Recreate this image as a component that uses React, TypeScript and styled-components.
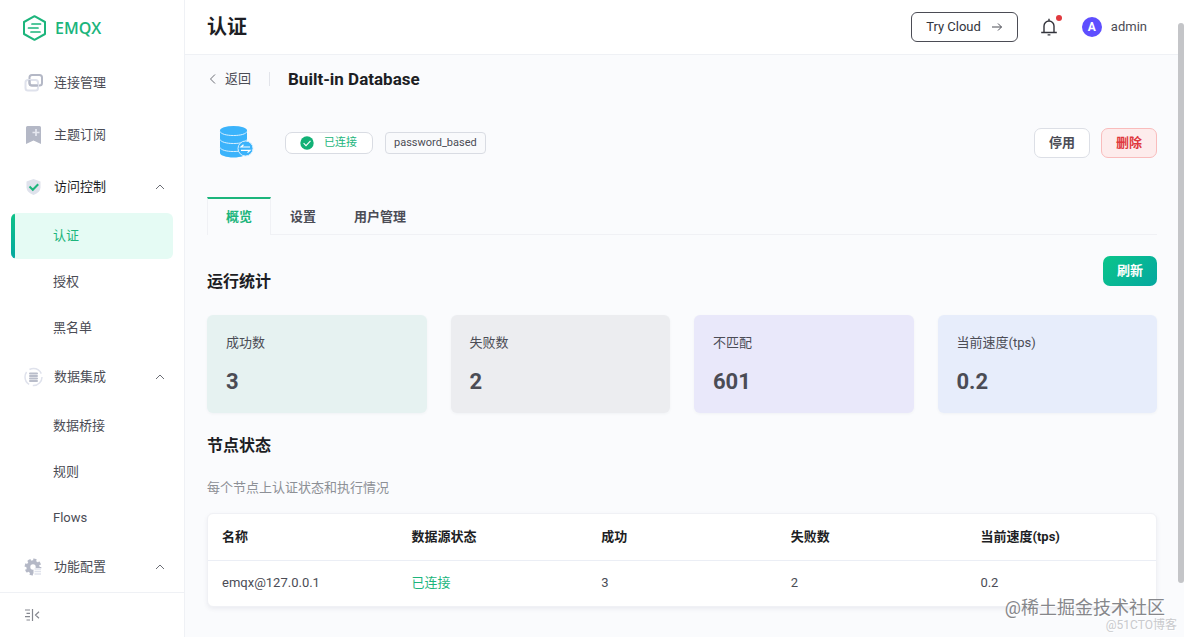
import React from "react";
import styled, { createGlobalStyle, css } from "styled-components";

const GlobalStyle = createGlobalStyle`
  *, *::before, *::after { box-sizing: border-box; }
  body {
    margin: 0;
    background: #fafbfd;
    color: #4b4c55;
    font: 13px/20px Roboto, "Noto Sans CJK SC", sans-serif;
  }
  h1, h2, h3, p, ul, dl, dd { margin: 0; padding: 0; }
  ul { list-style: none; }
  button { font: inherit; color: inherit; cursor: pointer; }
  a { color: inherit; text-decoration: none; }
  svg { display: block; flex: none; }
`;

const Shell = styled.div`
  position: relative;
  display: flex;
  height: 100vh;
  overflow: hidden;
`;

const Sidebar = styled.aside`
  display: flex;
  flex-direction: column;
  flex: 0 0 185px;
  background: #fff;
  border-right: 1px solid #eff1f5;
`;

const Brand = styled.a`
  display: flex;
  align-items: center;
  flex: 0 0 57px;
  gap: 8px;
  padding: 0 0 2px 22px;
  color: #1cb57c;
  font: 600 16px/20px "Open Sans", sans-serif;
`;

const Menu = styled.nav`
  flex: 1;
  min-height: 0;
  overflow: hidden;
`;

const groupStyle = css`
  display: flex;
  align-items: center;
  gap: 8px;
  width: 100%;
  height: 52px;
  padding: 0 18px 0 24px;
  border: 0;
  background: none;
  text-align: left;
`;

const GroupLink = styled.a`
  ${groupStyle}
`;

const GroupButton = styled.button<{ $current?: boolean }>`
  ${groupStyle}
  color: ${(p) => (p.$current ? "#1d1e24" : "#4b4c55")};
`;

const GroupLabel = styled.span`
  flex: 1;
  padding-left: 2px;
`;

const SubLink = styled.a<{ $active?: boolean }>`
  position: relative;
  display: flex;
  align-items: center;
  height: 46px;
  margin: 0 11px;
  padding-left: 42px;
  border-radius: 6px;
  overflow: hidden;
  ${(p) =>
    p.$active &&
    css`
      color: #1cb57c;
      background: #e5fbf4;
      &::before {
        content: "";
        position: absolute;
        inset: 0 auto 0 0;
        width: 4px;
        border-radius: 2px;
        background: linear-gradient(#0fc287, #05a8a0);
      }
    `}
`;

const SidebarFooter = styled.footer`
  display: flex;
  align-items: center;
  flex: 0 0 45px;
  padding-left: 24px;
  border-top: 1px solid #eff1f5;
`;

const IconButton = styled.button`
  position: relative;
  padding: 0;
  border: 0;
  background: none;
`;

const Main = styled.main`
  display: flex;
  flex-direction: column;
  flex: 1;
  min-width: 0;
`;

const TopBar = styled.header`
  display: flex;
  align-items: center;
  justify-content: space-between;
  flex: 0 0 55px;
  padding: 0 37px 0 22px;
  background: #fff;
  border-bottom: 1px solid #eff1f5;
`;

const PageTitle = styled.h1`
  color: #1d1e24;
  font-size: 20px;
  line-height: 28px;
  font-weight: 700;
`;

const TopActions = styled.div`
  display: flex;
  align-items: center;
`;

const CloudLink = styled.a`
  display: flex;
  align-items: center;
  gap: 10px;
  height: 30px;
  margin-right: 22px;
  padding: 0 14px;
  border: 1px solid #4b4c55;
  border-radius: 6px;
  color: #33343c;
`;

const Dot = styled.span`
  position: absolute;
  top: -3px;
  right: -4px;
  width: 6px;
  height: 6px;
  border-radius: 50%;
  background: #e0393e;
`;

const User = styled.button`
  display: flex;
  align-items: center;
  gap: 9px;
  margin-left: 24px;
  padding: 0;
  border: 0;
  background: none;
`;

const Avatar = styled.span`
  width: 20px;
  height: 20px;
  border-radius: 50%;
  background: #5e4eff;
  color: #fff;
  font-size: 12px;
  font-weight: 700;
  text-align: center;
`;

const Content = styled.div`
  flex: 1;
  min-height: 0;
  padding: 14px 27px 0 22px;
  overflow: hidden;
`;

const Crumbs = styled.div`
  display: flex;
  align-items: center;
  height: 20px;
`;

const BackLink = styled.a`
  display: flex;
  align-items: center;
  gap: 6px;
  height: 14px;
  padding-right: 18px;
  border-right: 1px solid #e2e4ea;
`;

const ResourceName = styled.h2`
  margin-left: 18px;
  color: #1d1e24;
  font-size: 17px;
  line-height: 20px;
  font-weight: 700;
`;

const Resource = styled.section`
  display: flex;
  align-items: center;
  height: 34px;
  margin-top: 37px;
  padding-left: 12px;
`;

const Tag = styled.span<{ $status?: boolean }>`
  display: flex;
  align-items: center;
  gap: 10px;
  height: 22px;
  padding: ${(p) => (p.$status ? "0 15px 0 14px" : "0 8px")};
  margin-left: ${(p) => (p.$status ? "31px" : "12px")};
  border: 1px solid #d9dce3;
  border-radius: ${(p) => (p.$status ? "7px" : "4px")};
  background: ${(p) => (p.$status ? "#fff" : "#f9fafc")};
  color: ${(p) => (p.$status ? "#1cb57c" : "#4b4c55")};
  font-size: 11px;
`;

const Buttons = styled.div`
  display: flex;
  gap: 11px;
  margin-left: auto;
`;

const looks = {
  plain: css`
    border: 1px solid #dcdfe6;
    background: #fff;
  `,
  danger: css`
    border: 1px solid #f9bcbc;
    background: #fdecec;
    color: #e0393e;
  `,
  primary: css`
    border: 0;
    background: linear-gradient(135deg, #0ac58a, #05a8a0);
    color: #fff;
  `,
};

const Button = styled.button<{ $look: keyof typeof looks }>`
  height: 30px;
  padding: 0 14px;
  border-radius: 7px;
  font-weight: 700;
  line-height: 20px;
  ${(p) => looks[p.$look]}
`;

const Tabs = styled.div`
  display: flex;
  height: 38px;
  margin-top: 37px;
`;

const Tab = styled.button<{ $active?: boolean }>`
  padding: 2px 19px 0;
  border: 0;
  border-bottom: 1px solid #f0f1f5;
  background: none;
  font-weight: 700;
  ${(p) =>
    p.$active &&
    css`
      padding: 0 18px;
      color: #1cb57c;
      border: 1px solid #f0f1f5;
      border-top: 2px solid #1cb57c;
      border-bottom: 0;
    `}
`;

const TabsRest = styled.div`
  flex: 1;
  border-bottom: 1px solid #f0f1f5;
`;

const SectionHead = styled.div`
  display: flex;
  align-items: flex-start;
  justify-content: space-between;
  height: 59px;
  margin-top: 21px;
`;

const SectionTitle = styled.h3`
  color: #1d1e24;
  font-size: 16px;
  line-height: 24px;
  font-weight: 700;
  ${SectionHead} & {
    padding-top: 14px;
  }
`;

const Stats = styled.dl`
  display: grid;
  grid-template-columns: repeat(4, 1fr);
  gap: 24px;
  margin-bottom: 21px;
`;

const Stat = styled.div<{ $tone: string }>`
  height: 98px;
  padding: 18px 19px;
  border-radius: 6px;
  background: ${(p) => p.$tone};
  box-shadow: 0 1px 3px rgba(60, 70, 100, 0.05);
  dd {
    margin-top: 16px;
    font-size: 22px;
    line-height: 26px;
    font-weight: 700;
  }
`;

const Hint = styled.p`
  margin: 20px 0 15px;
  color: #8d9096;
`;

const TableCard = styled.div`
  border: 1px solid #f0f1f5;
  border-radius: 6px;
  background: #fff;
  box-shadow: 0 2px 4px rgba(60, 70, 100, 0.08);
  overflow: hidden;
`;

const Table = styled.table`
  width: 100%;
  border-collapse: collapse;
  table-layout: fixed;
  th,
  td {
    height: 46px;
    padding: 0 14px;
    text-align: left;
  }
  th {
    color: #1d1e24;
    font-weight: 700;
    border-bottom: 1px solid #ebeef5;
  }
`;

const Connected = styled.span`
  color: #1cb57c;
`;

const ScrollThumb = styled.div`
  position: absolute;
  top: 23px;
  right: 0;
  bottom: 54px;
  width: 6px;
  border-radius: 3px;
  background: #c4c5c8;
`;

const Watermarks = styled.div`
  position: absolute;
  right: 7px;
  bottom: 5px;
  display: flex;
  flex-direction: column;
  align-items: flex-end;
  pointer-events: none;
`;

const Watermark = styled.span<{ $small?: boolean }>`
  margin-right: ${(p) => (p.$small ? "0" : "12px")};
  color: ${(p) => (p.$small ? "#c9cacd" : "#86878b")};
  font-size: ${(p) => (p.$small ? "12px" : "18px")};
  line-height: ${(p) => (p.$small ? "14px" : "20px")};
  text-shadow: 1px 1px 0 #fff;
`;

const LogoIcon = () => (
  <svg width="25" height="26" viewBox="0 0 25 26" fill="none" stroke="#1cb57c" strokeWidth="2" strokeLinejoin="round">
    <path d="M12.5 1.2 23 7v12l-10.500 5.800L2 19V7z" />
    <path d="M10 9h8.500M6.500 13h9.500M9 17h9" strokeLinecap="round" strokeWidth="1.700" />
  </svg>
);

const LinksIcon = () => (
  <svg width="20" height="20" viewBox="0 0 20 20" fill="none" strokeWidth="2">
    <rect x="5.500" y="2" width="12.500" height="10.500" rx="2.500" stroke="#b4b8c6" />
    <rect x="1.500" y="7" width="12.500" height="10.500" rx="2.500" stroke="#dfe2ec" />
    <path d="M5.500 7v3q0 2.500 2.500 2.500h6" stroke="#b4b8c6" />
  </svg>
);

const BookmarkIcon = () => (
  <svg width="20" height="20" viewBox="0 0 20 20">
    <path d="M2 2.500Q2 1 3.500 1h12Q17 1 17 2.500V19l-7.500-3.500L2 19z" fill="#b4b8c6" />
    <path d="M12 4v7M8.500 7.500h7" stroke="#e6e8f0" strokeWidth="1.700" />
  </svg>
);

const ShieldIcon = () => (
  <svg width="20" height="20" viewBox="0 0 20 20" fill="none">
    <path d="M9.500 2 16.500 4.500v6q0 4.500-7 7.500-7-3-7-7.500v-6z" fill="#dfe2ec" />
    <path d="m5.500 9.500 3.300 3.300 5.400-5.600" stroke="#1cb57c" strokeWidth="2" />
  </svg>
);

const DataIcon = () => (
  <svg width="20" height="20" viewBox="0 0 20 20" fill="none">
    <circle cx="9.500" cy="10" r="8.500" stroke="#dfe2ec" strokeWidth="1.500" strokeDasharray="14 3.800" />
    <path d="M6 6.500h7M6 9h7M6 11.500h7M6 14h7" stroke="#b9bdca" strokeWidth="2" strokeLinecap="round" />
  </svg>
);

const GearIcon = () => (
  <svg width="20" height="20" viewBox="0 0 20 20" fill="none">
    <circle cx="9" cy="10" r="4.700" stroke="#b4b8c6" strokeWidth="4" />
    <circle cx="9" cy="10" r="7.200" stroke="#b4b8c6" strokeWidth="2.400" strokeDasharray="3.200 2.455" />
    <path d="M9.500 11h8v7h-8z" fill="#fff" />
    <path d="M10.500 12h6.500M10.500 14.500h6.500M10.500 17h6.500" stroke="#dfe2ec" strokeWidth="1.500" />
  </svg>
);

const CollapseIcon = () => (
  <svg width="16" height="14" viewBox="0 0 16 14" fill="none" stroke="#85878f" strokeWidth="1.200">
    <path d="M1 2h5M2.500 5.300h3.500M1 8.700h5M2.500 12h3.500M8.500 1v12M15 3.800 11.500 7l3.500 3.200" />
  </svg>
);

const CaretIcon = ({ left = false }: { left?: boolean }) => (
  <svg width="12" height="12" viewBox="0 0 12 12" fill="none" stroke="#6b6d75">
    <path d={left ? "M8 1.500 3.500 6 8 10.500" : "M2 8l4-4 4 4"} />
  </svg>
);

const ArrowIcon = () => (
  <svg width="12" height="12" viewBox="0 0 12 12" fill="none" stroke="#4b4c55">
    <path d="M1 6h9.500M7 2.500 10.500 6 7 9.500" />
  </svg>
);

const BellIcon = () => (
  <svg width="18" height="18" viewBox="0 0 18 18" fill="none" stroke="#33343c" strokeWidth="1.400">
    <path d="M4 14.500V8a5 5 0 0 1 10 0v6.500M1.200 14.500h15.600M9 .8v2.200M7.600 16.900h2.800" />
  </svg>
);

const CheckIcon = () => (
  <svg width="14" height="14" viewBox="0 0 14 14" fill="none">
    <circle cx="7" cy="7" r="6.700" fill="#12b176" />
    <path d="m3.600 7.200 2.400 2.400 4.500-4.800" stroke="#fff" strokeWidth="1.100" />
  </svg>
);

const DatabaseIcon = () => (
  <svg width="35" height="36" viewBox="0 0 35 36" fill="none">
    <path d="M1 5.500v22.500c0 2.300 6 4.500 13.500 4.500S28 30.300 28 28V5.500z" fill="#3bb3fb" />
    <ellipse cx="14.500" cy="5.500" rx="13.500" ry="4.500" fill="#3bb3fb" />
    <path
      d="M1 6.500c1 2.400 6 4 13.500 4s12.500-1.600 13.500-4M1 14.500c1 2.400 6 4 13.500 4s12.500-1.600 13.500-4M1 22.500c1 2.400 6 4 13.500 4s12.500-1.600 13.500-4"
      stroke="#d9f0ff"
    />
    <circle cx="26.500" cy="23.500" r="7.500" fill="#3bb3fb" stroke="#d9f0ff" />
    <path d="M31 22h-9l2.500-2.300M22 25.300h9l-2.500 2.300" stroke="#fff" strokeWidth="1.200" />
  </svg>
);

const menu = [
  { label: "连接管理", icon: <LinksIcon /> },
  { label: "主题订阅", icon: <BookmarkIcon /> },
  { label: "访问控制", icon: <ShieldIcon />, current: true, items: ["认证", "授权", "黑名单"] },
  { label: "数据集成", icon: <DataIcon />, items: ["数据桥接", "规则", "Flows"] },
  { label: "功能配置", icon: <GearIcon />, items: [] },
];

const stats = [
  { label: "成功数", value: "3", tone: "#e6f2f1" },
  { label: "失败数", value: "2", tone: "#ecedf0" },
  { label: "不匹配", value: "601", tone: "#e9e8fa" },
  { label: "当前速度(tps)", value: "0.2", tone: "#e7edfb" },
];

const columns = ["名称", "数据源状态", "成功", "失败数", "当前速度(tps)"];

export default function App() {
  return (
    <Shell>
      <GlobalStyle />
      <Sidebar>
        <Brand href="#home">
          <LogoIcon />
          EMQX
        </Brand>
        <Menu>
          <ul>
            {menu.map((group) => (
              <li key={group.label}>
                {group.items ? (
                  <GroupButton type="button" aria-expanded="true" $current={group.current}>
                    {group.icon}
                    <GroupLabel>{group.label}</GroupLabel>
                    <CaretIcon />
                  </GroupButton>
                ) : (
                  <GroupLink href="#menu">
                    {group.icon}
                    <GroupLabel>{group.label}</GroupLabel>
                  </GroupLink>
                )}
                {group.items && (
                  <ul>
                    {group.items.map((item) => (
                      <li key={item}>
                        <SubLink href="#page" $active={item === "认证"}>
                          {item}
                        </SubLink>
                      </li>
                    ))}
                  </ul>
                )}
              </li>
            ))}
          </ul>
        </Menu>
        <SidebarFooter>
          <IconButton type="button" aria-label="收起菜单">
            <CollapseIcon />
          </IconButton>
        </SidebarFooter>
      </Sidebar>

      <Main>
        <TopBar>
          <PageTitle>认证</PageTitle>
          <TopActions>
            <CloudLink href="#cloud">
              Try Cloud
              <ArrowIcon />
            </CloudLink>
            <IconButton type="button" aria-label="通知">
              <BellIcon />
              <Dot />
            </IconButton>
            <User type="button">
              <Avatar>A</Avatar>
              admin
            </User>
          </TopActions>
        </TopBar>

        <Content>
          <Crumbs>
            <BackLink href="#back">
              <CaretIcon left />
              返回
            </BackLink>
            <ResourceName>Built-in Database</ResourceName>
          </Crumbs>

          <Resource>
            <DatabaseIcon />
            <Tag $status>
              <CheckIcon />
              已连接
            </Tag>
            <Tag>password_based</Tag>
            <Buttons>
              <Button type="button" $look="plain">停用</Button>
              <Button type="button" $look="danger">删除</Button>
            </Buttons>
          </Resource>

          <Tabs role="tablist">
            <Tab type="button" role="tab" aria-selected="true" $active>概览</Tab>
            <Tab type="button" role="tab" aria-selected="false">设置</Tab>
            <Tab type="button" role="tab" aria-selected="false">用户管理</Tab>
            <TabsRest />
          </Tabs>

          <SectionHead>
            <SectionTitle>运行统计</SectionTitle>
            <Button type="button" $look="primary">刷新</Button>
          </SectionHead>
          <Stats>
            {stats.map((s) => (
              <Stat key={s.label} $tone={s.tone}>
                <dt>{s.label}</dt>
                <dd>{s.value}</dd>
              </Stat>
            ))}
          </Stats>

          <SectionTitle>节点状态</SectionTitle>
          <Hint>每个节点上认证状态和执行情况</Hint>
          <TableCard>
            <Table>
              <thead>
                <tr>
                  {columns.map((c) => (
                    <th key={c} scope="col">{c}</th>
                  ))}
                </tr>
              </thead>
              <tbody>
                <tr>
                  <td>emqx@127.0.0.1</td>
                  <td><Connected>已连接</Connected></td>
                  <td>3</td>
                  <td>2</td>
                  <td>0.2</td>
                </tr>
              </tbody>
            </Table>
          </TableCard>
        </Content>
      </Main>

      <ScrollThumb />
      <Watermarks>
        <Watermark>@稀土掘金技术社区</Watermark>
        <Watermark $small>@51CTO博客</Watermark>
      </Watermarks>
    </Shell>
  );
}
